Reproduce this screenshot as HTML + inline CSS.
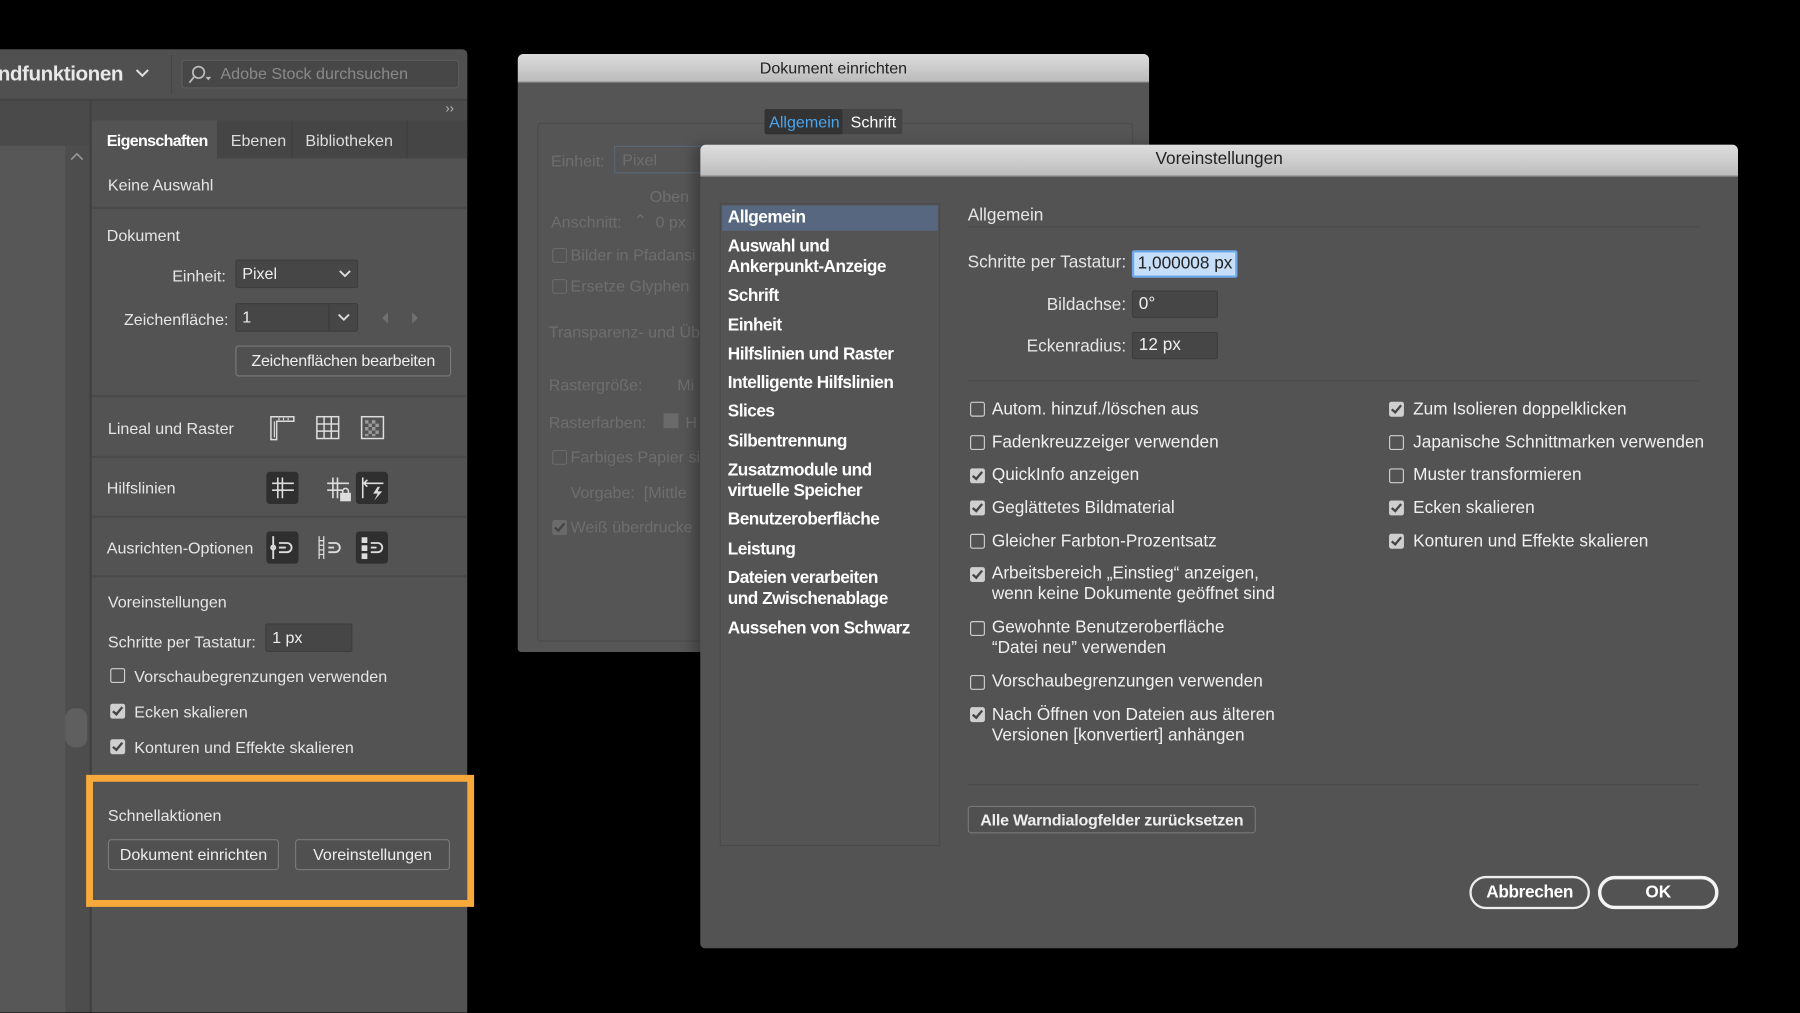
<!DOCTYPE html>
<html><head><meta charset="utf-8"><style>
html,body{margin:0;padding:0;background:#000;overflow:hidden;width:1800px;height:1012px}
#w{position:absolute;left:0;top:0;width:1568px;height:882px;transform:scale(1.14796);transform-origin:0 0;font-family:"Liberation Sans",sans-serif;color:#e6e6e6}
.a{position:absolute}
.t{position:absolute;white-space:nowrap;font-size:14px;line-height:18px}
.b{font-weight:bold}
.hl{position:absolute;height:2px;background:#4a4a4a}
.cb{position:absolute;width:11px;height:11px;border:1.5px solid #cfcfcf;border-radius:2px}
.cb.on{background:#cfcfcf;border-color:#cfcfcf}
.cb.on::after{content:"";position:absolute;left:3px;top:0px;width:3px;height:7px;border:solid #444;border-width:0 2px 2px 0;transform:rotate(40deg)}
.btn{position:absolute;border:1px solid #7a7a7a;border-radius:3px;background:#505050;font-size:14px;text-align:center;color:#eee;box-sizing:border-box}
.in{position:absolute;background:#464646;border:1px solid #3e3e3e;border-radius:2px;box-sizing:border-box;font-size:14px;padding-left:5px;color:#eee}
.ib{position:absolute;width:28px;height:28px;border-radius:3px;background:#2f2f2f}
.f{color:#6e6e6e}
.li{position:absolute;left:634px;font-size:15px;font-weight:bold;color:#fff;line-height:18px;white-space:nowrap;letter-spacing:-0.45px}
.ck{position:absolute;font-size:15px;color:#f0f0f0;line-height:18px;white-space:nowrap}
</style></head><body><div id="w">

<!-- left panel -->
<div class="a" style="left:0;top:43px;width:407px;height:839px;background:#535353;border-radius:0 4px 0 0"></div>
<div class="a" style="left:0;top:43px;width:407px;height:43px;background:#505050;border-radius:0 4px 0 0"></div>
<div class="t b" style="left:-2px;top:54px;font-size:18px;line-height:20px;color:#e8e8e8;letter-spacing:-0.4px">ndfunktionen</div>
<svg class="a" style="left:118px;top:60px" width="12" height="8"><path d="M1 1 L6 6 L11 1" stroke="#ddd" stroke-width="1.8" fill="none"/></svg>
<div class="a" style="left:149px;top:48px;width:1px;height:34px;background:#454545"></div>
<div class="a" style="left:158px;top:52px;width:242px;height:25px;background:#474747;border:1px solid #5c5c5c;border-radius:3px;box-sizing:border-box"></div>
<svg class="a" style="left:163px;top:56px" width="24" height="18"><circle cx="10" cy="7" r="5" stroke="#bbb" stroke-width="1.5" fill="none"/><path d="M6 11 L2 16" stroke="#bbb" stroke-width="1.5"/><path d="M16 11 L21 11 L18.5 14z" fill="#bbb"/></svg>
<div class="t" style="left:192px;top:55px;color:#8a8a8a;font-size:14px">Adobe Stock durchsuchen</div>
<div class="a" style="left:0;top:86px;width:407px;height:2px;background:#444"></div>
<div class="a" style="left:0;top:88px;width:78px;height:39px;background:#4a4a4a"></div>
<div class="a" style="left:0;top:127px;width:57px;height:755px;background:#575757"></div>
<div class="a" style="left:57px;top:127px;width:21px;height:755px;background:#4d4d4d"></div>
<svg class="a" style="left:60px;top:132px" width="14" height="9"><path d="M2 7 L7 2 L12 7" stroke="#999" stroke-width="1.4" fill="none"/></svg>
<div class="a" style="left:57px;top:617px;width:19px;height:34px;background:#5f5f5f;border-radius:8px"></div>
<div class="a" style="left:78px;top:88px;width:2px;height:794px;background:#404040"></div>
<div class="a" style="left:80px;top:88px;width:327px;height:17px;background:#4a4a4a"></div>
<div class="t" style="left:388px;top:86px;font-size:11px;color:#bbb">››</div>
<div class="a" style="left:80px;top:105px;width:327px;height:33px;background:#454545"></div>
<div class="a" style="left:80px;top:105px;width:109px;height:34px;background:#535353"></div>
<div class="a" style="left:254px;top:105px;width:1px;height:33px;background:#3e3e3e"></div>
<div class="a" style="left:354px;top:105px;width:1px;height:33px;background:#3e3e3e"></div>
<div class="t b" style="left:93px;top:113px;color:#fff;letter-spacing:-0.6px">Eigenschaften</div>
<div class="t" style="left:201px;top:113px;color:#ddd">Ebenen</div>
<div class="t" style="left:266px;top:113px;color:#ddd">Bibliotheken</div>
<div class="t" style="left:94px;top:152px">Keine Auswahl</div>
<div class="hl" style="left:80px;top:180px;width:327px"></div>
<div class="t" style="left:93px;top:196px">Dokument</div>
<div class="t" style="left:150px;top:231px">Einheit:</div>
<div class="in" style="left:205px;top:226px;width:107px;height:25px;line-height:23px">Pixel</div>
<svg class="a" style="left:295px;top:235px" width="11" height="7"><path d="M1 1 L5.5 5.5 L10 1" stroke="#ddd" stroke-width="1.6" fill="none"/></svg>
<div class="t" style="left:108px;top:269px">Zeichenfläche:</div>
<div class="in" style="left:205px;top:264px;width:107px;height:25px;line-height:23px">1</div>
<div class="a" style="left:286px;top:265px;width:1px;height:23px;background:#3a3a3a"></div>
<svg class="a" style="left:294px;top:273px" width="11" height="7"><path d="M1 1 L5.5 5.5 L10 1" stroke="#ddd" stroke-width="1.6" fill="none"/></svg>
<svg class="a" style="left:330px;top:270px" width="40" height="14"><path d="M8 2 L3 7 L8 12z" fill="#707070"/><path d="M29 2 L34 7 L29 12z" fill="#707070"/></svg>
<div class="btn" style="left:205px;top:301px;width:188px;height:27px;line-height:25px;letter-spacing:-0.2px">Zeichenflächen bearbeiten</div>
<div class="hl" style="left:80px;top:344px;width:327px"></div>
<div class="t" style="left:94px;top:364px">Lineal und Raster</div>
<svg class="a" style="left:234px;top:361px" width="112" height="24" fill="none" stroke="#ddd" stroke-width="1.3">
<path d="M2 2 H22 V6 H7 V22 H2z"/><path d="M5 6 V20 M9 3 V5 M13 3 V5 M17 3 V5" stroke-width="1"/>
<rect x="42" y="2" width="19" height="19"/><path d="M48.3 2 V21 M54.6 2 V21 M42 8.3 H61 M42 14.6 H61"/>
<rect x="81" y="2" width="19" height="19"/><path d="M84 5h3v3h-3zM90 5h3v3h-3zM87 8h3v3h-3zM93 8h3v3h-3zM84 11h3v3h-3zM90 11h3v3h-3zM87 14h3v3h-3zM93 14h3v3h-3zM84 17h3v2h-3zM90 17h3v2h-3z" fill="#999" stroke="none"/></svg>
<div class="hl" style="left:80px;top:397px;width:327px"></div>
<div class="t" style="left:93px;top:416px">Hilfslinien</div>
<div class="ib" style="left:232px;top:411px"></div><div class="ib" style="left:310px;top:411px"></div>
<svg class="a" style="left:232px;top:411px" width="108" height="28" fill="none" stroke="#ddd" stroke-width="1.4">
<path d="M10 5 V23 M14 5 V23 M5 10 H24 M5 16 H24"/>
<path d="M58 5 V23 M62 5 V23 M53 10 H72 M53 16 H66"/><rect x="65" y="19" width="8" height="6" fill="#ddd"/><path d="M66.5 19 V17 A2.5 2.5 0 0 1 71.5 17 V19"/>
<path d="M84 5 V23 M84 10 H102 M88 7 L85 10 L88 13"/><path d="M97 13 L93 19 H97 L94 25 L101 17 H97 L99 13z" fill="#ddd" stroke="none"/></svg>
<div class="hl" style="left:80px;top:449px;width:327px"></div>
<div class="t" style="left:93px;top:468px">Ausrichten-Optionen</div>
<div class="ib" style="left:232px;top:463px"></div><div class="ib" style="left:310px;top:463px"></div>
<svg class="a" style="left:232px;top:463px" width="108" height="28" fill="none" stroke="#ddd" stroke-width="1.6">
<path d="M6 4 V24"/><circle cx="6" cy="14" r="1.8"/><path d="M11 10 H18 A4 4 0 0 1 18 18 H11 M11 14 H17"/>
<path d="M46 4 V24 M50 4 V24 M46 8 H50 M46 12 H50 M46 16 H50 M46 20 H50" stroke-width="1.1"/><path d="M54 10 H60 A4 4 0 0 1 60 18 H54 M54 14 H59"/>
<rect x="83" y="5" width="5" height="5" fill="#ddd" stroke="none"/><rect x="83" y="12" width="5" height="5" fill="#ddd" stroke="none"/><rect x="83" y="19" width="5" height="5" fill="#ddd" stroke="none"/><path d="M91 10 H97 A4 4 0 0 1 97 18 H91 M91 14 H96"/></svg>
<div class="hl" style="left:80px;top:501px;width:327px"></div>
<div class="t" style="left:94px;top:515px">Voreinstellungen</div>
<div class="t" style="left:94px;top:550px">Schritte per Tastatur:</div>
<div class="in" style="left:231px;top:543px;width:76px;height:25px;line-height:22px">1 px</div>
<div class="cb" style="left:96px;top:582px"></div><div class="t" style="left:117px;top:580px">Vorschaubegrenzungen verwenden</div>
<div class="cb on" style="left:96px;top:613px"></div><div class="t" style="left:117px;top:611px">Ecken skalieren</div>
<div class="cb on" style="left:96px;top:644px"></div><div class="t" style="left:117px;top:642px">Konturen und Effekte skalieren</div>
<div class="a" style="left:75px;top:675px;width:338px;height:115px;border:6px solid #f7a93b;box-sizing:border-box"></div>
<div class="t" style="left:94px;top:701px">Schnellaktionen</div>
<div class="btn" style="left:94px;top:731px;width:149px;height:27px;line-height:25px">Dokument einrichten</div>
<div class="btn" style="left:257px;top:731px;width:135px;height:27px;line-height:25px">Voreinstellungen</div>

<!-- Dokument einrichten -->
<div class="a" style="left:451px;top:47px;width:550px;height:521px;background:#555;border-radius:5px 5px 3px 3px;overflow:hidden">
<div class="a" style="left:0;top:0;width:550px;height:24px;background:linear-gradient(#dcdcdc,#bcbcbc);border-bottom:1px solid #8a8a8a"></div>
<div class="t" style="left:0;width:550px;text-align:center;top:3px;color:#222;font-size:14px">Dokument einrichten</div>
<div class="a" style="left:17px;top:60px;width:517px;height:450px;border:1px solid #4c4c4c;border-radius:3px"></div>
</div>
<div class="a" style="left:666px;top:95px;width:120px;height:22px;background:#444;border-radius:2px"></div>
<div class="a" style="left:666px;top:95px;width:68px;height:22px;background:#333;border-radius:2px"></div>
<div class="t" style="left:670px;top:97px;color:#4aa6ef">Allgemein</div>
<div class="t" style="left:741px;top:97px;color:#fff">Schrift</div>
<div class="t f" style="left:480px;top:131px">Einheit:</div>
<div class="a" style="left:535px;top:127px;width:80px;height:24px;border:1px solid #5a6878;box-sizing:border-box"></div>
<div class="t f" style="left:542px;top:130px">Pixel</div>
<div class="t f" style="left:566px;top:162px">Oben</div>
<div class="t f" style="left:480px;top:184px">Anschnitt:</div>
<div class="t f" style="left:552px;top:183px">⌃</div>
<div class="t f" style="left:571px;top:184px">0 px</div>
<div class="cb" style="left:481px;top:216px;border-color:#6a6a6a"></div><div class="t f" style="left:497px;top:213px">Bilder in Pfadansi</div>
<div class="cb" style="left:481px;top:243px;border-color:#6a6a6a"></div><div class="t f" style="left:497px;top:240px">Ersetze Glyphen</div>
<div class="t f" style="left:478px;top:280px">Transparenz- und Üb</div>
<div class="t f" style="left:478px;top:326px">Rastergröße:</div>
<div class="t f" style="left:590px;top:326px">Mi</div>
<div class="t f" style="left:478px;top:359px">Rasterfarben:</div>
<div class="a" style="left:578px;top:360px;width:13px;height:13px;background:#6a6a6a"></div>
<div class="t f" style="left:597px;top:359px">H</div>
<div class="cb" style="left:481px;top:392px;border-color:#6a6a6a"></div><div class="t f" style="left:497px;top:389px">Farbiges Papier si</div>
<div class="t f" style="left:497px;top:420px">Vorgabe:&nbsp;&nbsp;[Mittle</div>
<div class="cb on" style="left:481px;top:453px;background:#6a6a6a;border-color:#6a6a6a"></div><div class="t f" style="left:497px;top:450px">Weiß überdrucke</div>

<!-- Voreinstellungen -->
<div class="a" style="left:610px;top:126px;width:904px;height:700px;background:#535353;border-radius:5px 5px 4px 4px;overflow:hidden;box-shadow:-6px 0 10px rgba(0,0,0,.25)">
<div class="a" style="left:0;top:0;width:904px;height:27px;background:linear-gradient(#dedede,#bdbdbd);border-bottom:1px solid #8a8a8a"></div>
<div class="t" style="left:0;width:904px;text-align:center;top:4px;color:#222;font-size:15px">Voreinstellungen</div>
</div>
<div class="a" style="left:627px;top:177px;width:192px;height:560px;border:1px solid #4a4a4a;box-sizing:border-box;background:#545454"></div>
<div class="a" style="left:629px;top:179px;width:188px;height:22px;background:#56677f"></div>
<div class="li" style="top:181px">Allgemein</div>
<div class="li" style="top:206px">Auswahl und<br>Ankerpunkt-Anzeige</div>
<div class="li" style="top:249px">Schrift</div>
<div class="li" style="top:275px">Einheit</div>
<div class="li" style="top:300px">Hilfslinien und Raster</div>
<div class="li" style="top:325px">Intelligente Hilfslinien</div>
<div class="li" style="top:350px">Slices</div>
<div class="li" style="top:376px">Silbentrennung</div>
<div class="li" style="top:401px">Zusatzmodule und<br>virtuelle Speicher</div>
<div class="li" style="top:444px">Benutzeroberfläche</div>
<div class="li" style="top:470px">Leistung</div>
<div class="li" style="top:495px">Dateien verarbeiten<br>und Zwischenablage</div>
<div class="li" style="top:539px">Aussehen von Schwarz</div>

<div class="t" style="left:843px;top:179px;font-size:15px">Allgemein</div>
<div class="hl" style="left:843px;top:197px;width:637px;height:1px"></div>
<div class="t" style="left:700px;width:281px;text-align:right;top:220px;font-size:15px">Schritte per Tastatur:</div>
<div class="a" style="left:986px;top:218px;width:92px;height:24px;background:#c6def8;border:2px solid #6fa8e8;border-radius:2px;box-sizing:border-box"></div>
<div class="t" style="left:991px;top:221px;font-size:15px;color:#222">1,000008 px</div>
<div class="t" style="left:700px;width:281px;text-align:right;top:257px;font-size:15px">Bildachse:</div>
<div class="in" style="left:986px;top:253px;width:75px;height:24px;line-height:22px;font-size:15px">0°</div>
<div class="t" style="left:700px;width:281px;text-align:right;top:293px;font-size:15px">Eckenradius:</div>
<div class="in" style="left:986px;top:289px;width:75px;height:24px;line-height:22px;font-size:15px">12 px</div>
<div class="hl" style="left:843px;top:331px;width:637px;height:1px"></div>

<div class="cb" style="left:845px;top:350px"></div><div class="ck" style="left:864px;top:348px">Autom. hinzuf./löschen aus</div>
<div class="cb" style="left:845px;top:379px"></div><div class="ck" style="left:864px;top:377px">Fadenkreuzzeiger verwenden</div>
<div class="cb on" style="left:845px;top:408px"></div><div class="ck" style="left:864px;top:405px">QuickInfo anzeigen</div>
<div class="cb on" style="left:845px;top:436px"></div><div class="ck" style="left:864px;top:434px">Geglättetes Bildmaterial</div>
<div class="cb" style="left:845px;top:465px"></div><div class="ck" style="left:864px;top:463px">Gleicher Farbton-Prozentsatz</div>
<div class="cb on" style="left:845px;top:494px"></div><div class="ck" style="left:864px;top:491px">Arbeitsbereich „Einstieg“ anzeigen,<br>wenn keine Dokumente geöffnet sind</div>
<div class="cb" style="left:845px;top:541px"></div><div class="ck" style="left:864px;top:538px">Gewohnte Benutzeroberfläche<br>“Datei neu” verwenden</div>
<div class="cb" style="left:845px;top:588px"></div><div class="ck" style="left:864px;top:585px">Vorschaubegrenzungen verwenden</div>
<div class="cb on" style="left:845px;top:616px"></div><div class="ck" style="left:864px;top:614px">Nach Öffnen von Dateien aus älteren<br>Versionen [konvertiert] anhängen</div>

<div class="cb on" style="left:1210px;top:350px"></div><div class="ck" style="left:1231px;top:348px">Zum Isolieren doppelklicken</div>
<div class="cb" style="left:1210px;top:379px"></div><div class="ck" style="left:1231px;top:377px">Japanische Schnittmarken verwenden</div>
<div class="cb" style="left:1210px;top:408px"></div><div class="ck" style="left:1231px;top:405px">Muster transformieren</div>
<div class="cb on" style="left:1210px;top:436px"></div><div class="ck" style="left:1231px;top:434px">Ecken skalieren</div>
<div class="cb on" style="left:1210px;top:465px"></div><div class="ck" style="left:1231px;top:463px">Konturen und Effekte skalieren</div>

<div class="hl" style="left:843px;top:683px;width:637px;height:1px"></div>
<div class="btn" style="left:843px;top:702px;width:251px;height:24px;line-height:22px;font-size:14px;font-weight:bold;border-color:#777;letter-spacing:-0.2px">Alle Warndialogfelder zurücksetzen</div>
<div class="a" style="left:1280px;top:763px;width:105px;height:29px;border:2px solid #eee;border-radius:15px;box-sizing:border-box;text-align:center;line-height:25px;font-size:15px;font-weight:bold;color:#fff;letter-spacing:-0.3px">Abbrechen</div>
<div class="a" style="left:1392px;top:763px;width:105px;height:29px;border:3px solid #f4f4f4;border-radius:15px;box-sizing:border-box;text-align:center;line-height:23px;font-size:15px;font-weight:bold;color:#fff">OK</div>

</div></body></html>
